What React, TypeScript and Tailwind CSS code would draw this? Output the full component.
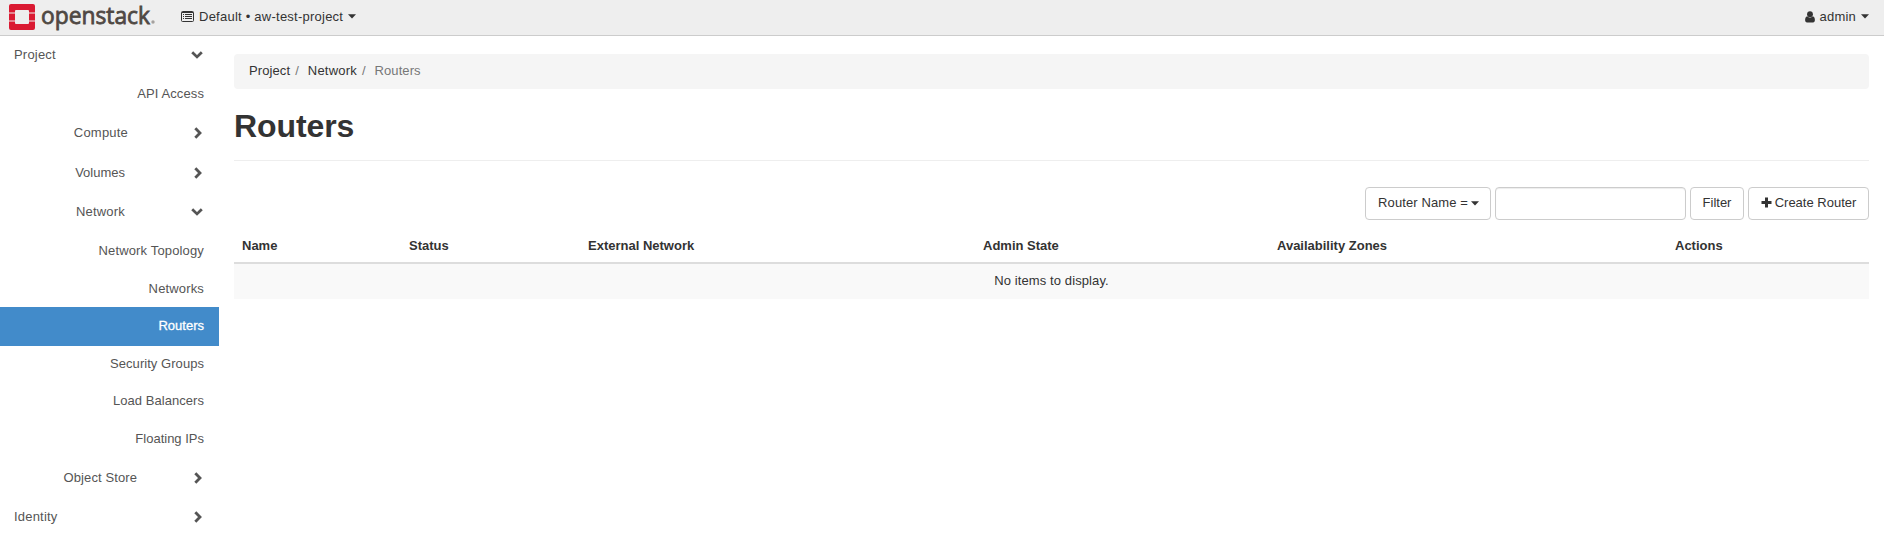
function Caret() {
  return (
    <svg width="8" height="5" viewBox="0 0 8 5" className="shrink-0 fill-current">
      <path d="M0 0.300h8L4 4.600z" />
    </svg>
  );
}

function ChevronDown() {
  return (
    <svg width="12" height="8" viewBox="0 0 12 8" className="shrink-0 fill-none stroke-current stroke-[2.800]">
      <path d="M1.200 1.300L6 5.900l4.800-4.600" />
    </svg>
  );
}

function ChevronRight() {
  return (
    <svg width="8" height="12" viewBox="0 0 8 12" className="shrink-0 fill-none stroke-current stroke-[2.800]">
      <path d="M1.300 1.200L6 6l-4.700 4.800" />
    </svg>
  );
}

function Logo() {
  return (
    <svg width="148" height="35" viewBox="0 0 148 35" className="shrink-0">
      <g fill="#da1a32">
        <path d="M2 4h22a2 2 0 0 1 2 2v6.500h-6V11a1 1 0 0 0-1-1H7a1 1 0 0 0-1 1v1.500H0V6a2 2 0 0 1 2-2z" />
        <path d="M0 13.600h6v6.900H0zM20 13.600h6v6.900h-6z" />
        <path d="M0 21.600h6V23a1 1 0 0 0 1 1h12a1 1 0 0 0 1-1v-1.400h6V28a2 2 0 0 1-2 2H2a2 2 0 0 1-2-2z" />
      </g>
      <text x="32" y="23.500" fontSize="23" textLength="109" lengthAdjust="spacingAndGlyphs" fill="#4f4843" stroke="#4f4843" strokeWidth="0.8" fontFamily="Open Sans, sans-serif">
        openstack
      </text>
      <circle cx="144" cy="22" r="1.700" fill="#a5a19e" />
    </svg>
  );
}

type Item = { label: string; box: string; chevron?: "down" | "right"; labelBox?: string; active?: boolean };

const items: Item[] = [
  { label: "Project", box: "h-[38px]", chevron: "down", labelBox: "tracking-[0.2px]" },
  { label: "API Access", box: "h-[39px]", labelBox: "tracking-[0.1px]" },
  { label: "Compute", box: "h-10", chevron: "right", labelBox: "w-[114px] text-right tracking-[0.2px]" },
  { label: "Volumes", box: "h-[39px]", chevron: "right", labelBox: "w-[111px] text-right" },
  { label: "Network", box: "h-[39px]", chevron: "down", labelBox: "w-[111px] text-right tracking-[0.2px]" },
  { label: "Network Topology", box: "h-[39px]", labelBox: "tracking-[0.15px]" },
  { label: "Networks", box: "h-[37px]", labelBox: "tracking-[0.15px]" },
  { label: "Routers", box: "h-[39px] pb-0.5", active: true },
  { label: "Security Groups", box: "h-9", labelBox: "tracking-[0.05px]" },
  { label: "Load Balancers", box: "h-[38px]", labelBox: "tracking-[0.05px]" },
  { label: "Floating IPs", box: "h-[37px]" },
  { label: "Object Store", box: "h-[41px]", chevron: "right", labelBox: "w-[123px] text-right tracking-[0.1px]" },
  { label: "Identity", box: "h-[38px]", chevron: "right", labelBox: "tracking-[0.2px]" },
];

function Sidebar() {
  return (
    <nav className="w-[219px] shrink-0">
      <ul>
        {items.map((item) => (
          <li
            key={item.label}
            className={`flex items-center pr-[15px] pl-3.5 ${item.box} ${item.chevron ? "justify-between" : "justify-end"} ${item.active ? "bg-[#428bca] text-white [-webkit-text-stroke:0.3px_white]" : "text-[#555]"}`}
          >
            <span className={item.labelBox}>{item.label}</span>
            {item.chevron === "down" && (
              <span className="mr-px">
                <ChevronDown />
              </span>
            )}
            {item.chevron === "right" && (
              <span className="mr-0.5">
                <ChevronRight />
              </span>
            )}
          </li>
        ))}
      </ul>
    </nav>
  );
}

const columns = [
  { label: "Name", width: "w-[167px]" },
  { label: "Status", width: "w-[179px]" },
  { label: "External Network", width: "w-[395px]" },
  { label: "Admin State", width: "w-[294px]" },
  { label: "Availability Zones", width: "w-[398px]" },
  { label: "Actions", width: "w-[202px]" },
];

export default function App() {
  return (
    <div className="h-[541px] overflow-hidden bg-white font-['Liberation_Sans',Arial,sans-serif] text-[13px] leading-[18px] text-[#333]">
      <header className="flex h-9 items-start border-b border-[#ccc] bg-[#eee] pr-[15px] pl-[9px]">
        <Logo />
        <div className="ml-6 flex h-[33px] items-center">
          <svg width="13" height="11" viewBox="0 0 13 11" className="mr-[5px]">
            <path d="M1.500 0.500h10a1 1 0 0 1 1 1v8a1 1 0 0 1-1 1h-10a1 1 0 0 1-1-1v-8a1 1 0 0 1 1-1z" fill="none" stroke="#333" />
            <path d="M1 1h11v1H1zM2 3h1v1H2zM4 3h7v1H4zM2 5h1v1H2zM4 5h7v1H4zM2 7h1v1H2zM4 7h7v1H4z" fill="#333" />
          </svg>
          <span className="mr-[5px] tracking-[0.24px]">Default • aw-test-project</span>
          <Caret />
        </div>
        <div className="ml-auto flex h-[33px] items-center">
          <svg width="10" height="12" viewBox="0 0 10 12" className="mr-[5px] fill-current">
            <circle cx="5" cy="3.200" r="2.900" />
            <path d="M2.200 5.200Q5 7.600 7.800 5.200Q9.900 5.600 9.900 9.300Q9.900 11.400 8.200 11.400H1.800Q0.100 11.400 0.100 9.300Q0.100 5.600 2.200 5.200z" />
          </svg>
          <span className="mr-[5px] tracking-[0.2px]">admin</span>
          <Caret />
        </div>
      </header>

      <div className="flex">
        <Sidebar />
        <main className="w-[1650px] pt-[18px] pl-[15px]">
          <div className="w-[1635px]">
            <div className="flex h-[35px] items-center rounded bg-[#f5f5f5] px-[15px] pb-0.5">
              <span className="tracking-[0.1px]">Project</span>
              <span className="mr-[9px] ml-[5px] text-[#777]">/</span>
              <span className="tracking-[0.2px]">Network</span>
              <span className="mr-[9px] ml-[5px] text-[#777]">/</span>
              <span className="tracking-[0.1px] text-[#777]">Routers</span>
            </div>

            <h1 className="flex h-[72px] items-center border-b border-[#eee] pt-0.5 text-[32px] font-bold tracking-[-0.1px]">Routers</h1>

            <div className="mt-[26px] flex h-[33px] justify-end gap-1">
              <button className="flex w-[126px] items-center justify-center gap-[3px] rounded border border-[#ccc] pb-px pl-px">
                <span className="tracking-[0.1px]">Router Name =</span>
                <Caret />
              </button>
              <input className="w-[191px] rounded border border-[#ccc] shadow-[inset_0_1px_1px_rgba(0,0,0,0.075)]" />
              <button className="w-[54px] rounded border border-[#ccc] pb-px">Filter</button>
              <button className="flex w-[121px] items-center justify-center gap-[3px] rounded border border-[#ccc] pb-px">
                <svg width="11" height="11" viewBox="0 0 11 11" className="mb-px fill-current">
                  <path d="M4 0.500h3V4h3.500v3H7v3.500H4V7H0.500V4H4z" />
                </svg>
                Create Router
              </button>
            </div>

            <table className="mt-2 w-full table-fixed border-collapse">
              <thead>
                <tr className="h-[35px] border-b-2 border-[#ddd]">
                  {columns.map((c) => (
                    <th key={c.label} className={`px-2 pt-0.5 text-left font-bold ${c.width}`}>
                      {c.label}
                    </th>
                  ))}
                </tr>
              </thead>
              <tbody>
                <tr className="h-9 bg-[#f9f9f9]">
                  <td colSpan={6} className="pb-0.5 text-center tracking-[0.1px]">
                    No items to display.
                  </td>
                </tr>
              </tbody>
            </table>
          </div>
        </main>
      </div>
    </div>
  );
}
